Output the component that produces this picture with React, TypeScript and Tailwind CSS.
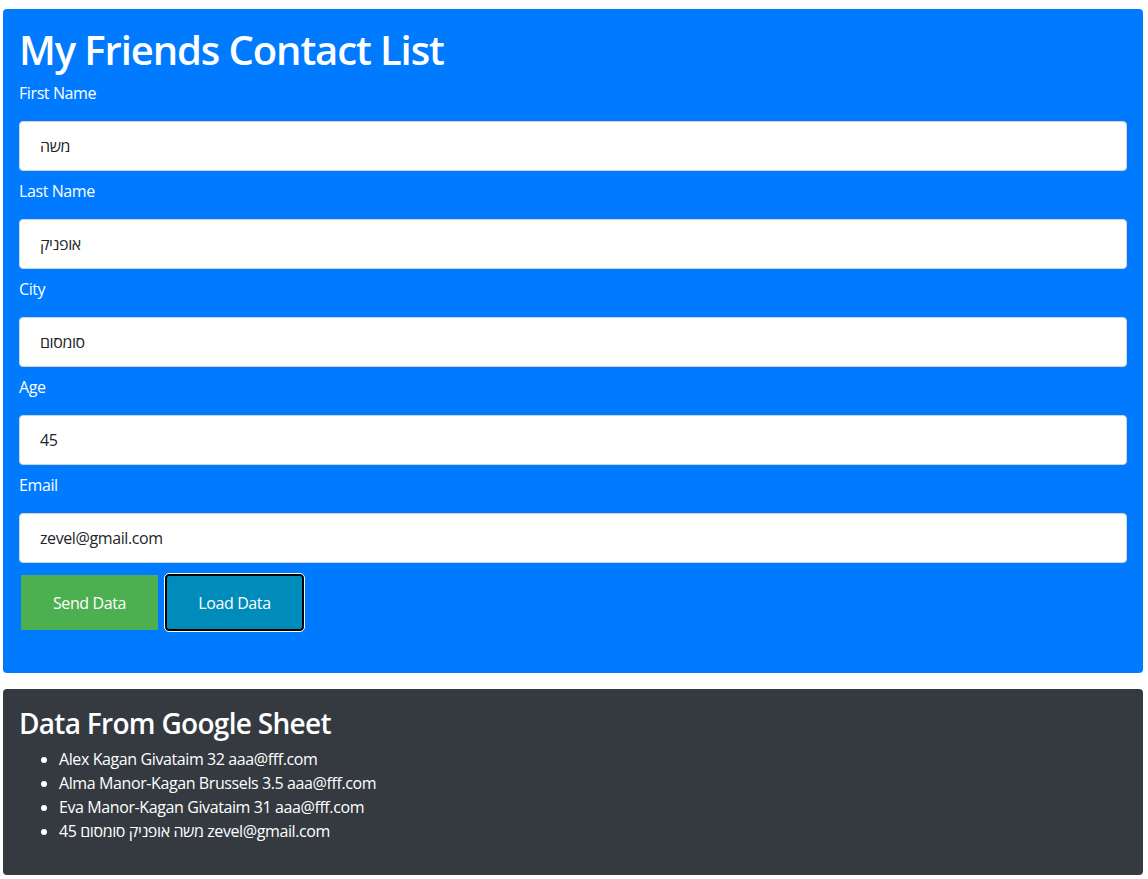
const fields = [
  { label: "First Name", value: "משה" },
  { label: "Last Name", value: "אופניק" },
  { label: "City", value: "סומסום" },
  { label: "Age", value: "45" },
  { label: "Email", value: "zevel@gmail.com" },
];

const rows = [
  "Alex Kagan Givataim 32 aaa@fff.com",
  "Alma Manor-Kagan Brussels 3.5 aaa@fff.com",
  "Eva Manor-Kagan Givataim 31 aaa@fff.com",
  "משה אופניק סומסום 45 zevel@gmail.com",
];

export default function App() {
  return (
    <div
      className="min-h-screen bg-white pt-[9px] pl-[3px] pr-[5px] tracking-[-0.4px] text-white"
      style={{ fontFamily: '"Open Sans", "DejaVu Sans", sans-serif' }}
    >
      <div className="rounded bg-[#007bff] p-4 pb-[42px]">
        <h1 className="mb-2 pt-[2px] text-[40px] font-semibold leading-[46px] tracking-[-1.1px]">
          My Friends Contact List
        </h1>
        <form onSubmit={(e) => e.preventDefault()}>
          {fields.map((f, i) => (
            <div key={f.label} className={i > 0 ? "mt-2" : ""}>
              <label className="mb-4 block text-base leading-6">{f.label}</label>
              <input
                defaultValue={f.value}
                className="block h-[50px] w-[1108px] rounded border border-[#ced4da] bg-white px-5 text-base tracking-[-0.4px] text-[#212529] outline-none"
              />
            </div>
          ))}
          <div className="mt-[11px] flex items-center gap-[7px] pl-[2px]">
            <button
              type="button"
              className="h-[55px] w-[137px] bg-[#4caf50] text-base text-white"
            >
              Send Data
            </button>
            <button
              type="button"
              className="h-[57px] w-[139px] rounded border-2 border-black bg-[#008cba] text-base text-white outline outline-1 outline-white"
            >
              Load Data
            </button>
          </div>
        </form>
      </div>

      <div className="mt-4 rounded bg-[#343a40] p-4 pb-8">
        <h3 className="mb-2 pt-[2px] text-[28px] font-semibold leading-[32px] tracking-[-0.7px]">
          Data From Google Sheet
        </h3>
        <ul className="list-disc pl-10 text-base leading-6">
          {rows.map((r) => (
            <li key={r}>{r}</li>
          ))}
        </ul>
      </div>
    </div>
  );
}
